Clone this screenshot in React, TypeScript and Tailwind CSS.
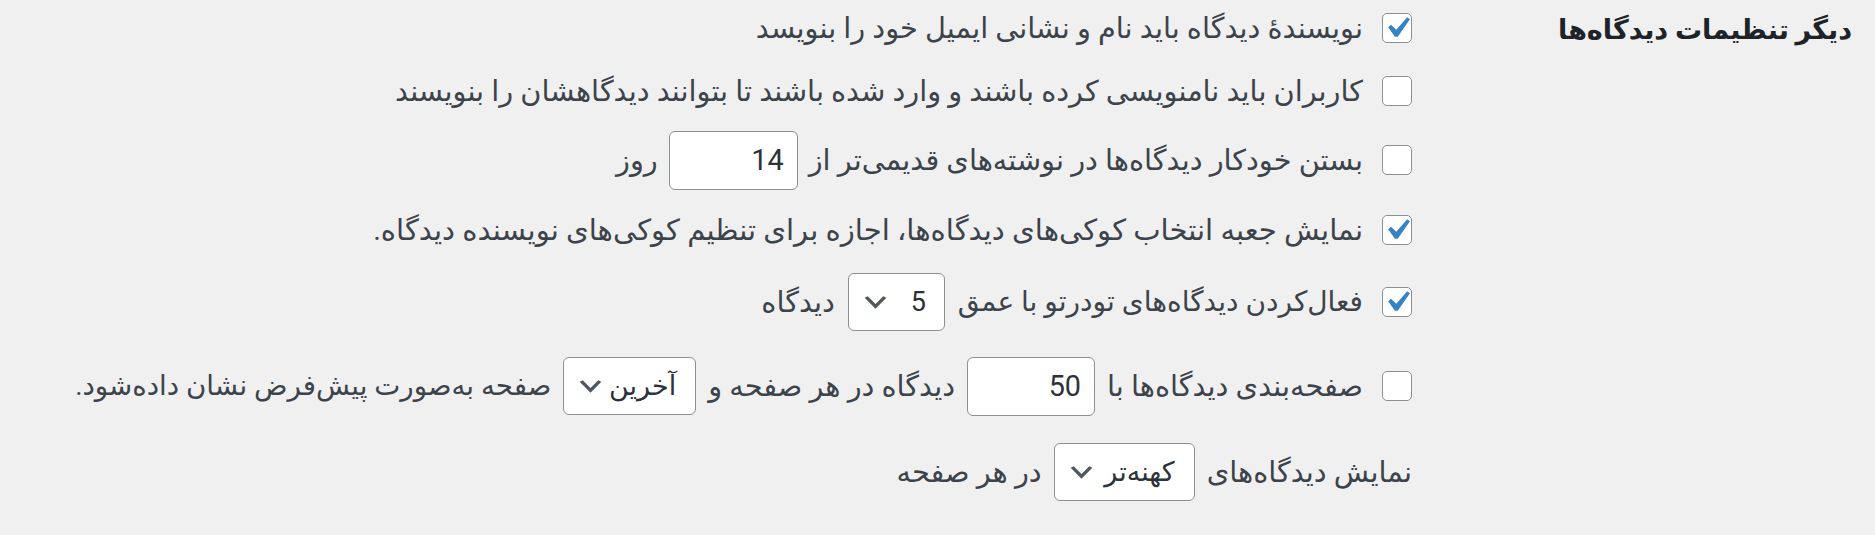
import React from "react";

const FONT = "font-['Roboto','DejaVu_Sans',sans-serif]";

function Check({ checked }: { checked?: boolean }) {
  return (
    <span className="relative flex h-[30px] w-[30px] shrink-0 items-center justify-center rounded-[5px] border border-[#8c8f94] bg-white">
      {checked && (
        <svg viewBox="0 0 20 20" className="absolute h-[42px] w-[42px]" aria-hidden="true">
          <path d="M14.83 4.89l1.34.94-5.81 8.38H9.02L5.78 9.67l1.34-1.25 2.57 2.4z" fill="#3582c4" />
        </svg>
      )}
    </span>
  );
}

function NumInput({ value, w }: { value: string; w: string }) {
  return (
    <input
      readOnly
      value={value}
      className={`${w} h-[59px] shrink-0 rounded-[6px] border border-[#8c8f94] bg-white px-[13px] text-right text-[28.8px] text-[#2c3338] outline-none ${FONT}`}
    />
  );
}

function Select({ value, w, pr }: { value: string; w: string; pr: string }) {
  return (
    <div
      className={`${w} ${pr} flex h-[58px] shrink-0 items-center justify-between overflow-hidden rounded-[6px] border border-[#8c8f94] bg-white pl-[11px] text-[27px] text-[#2c3338]`}
    >
      <span className="whitespace-nowrap leading-none">{value}</span>
      <svg viewBox="0 0 20 20" className="h-[31px] w-[31px] shrink-0" aria-hidden="true">
        <path d="M5 6l5 5 5-5 2 1-7 7-7-7 2-1z" fill="#50575e" />
      </svg>
    </div>
  );
}

function Row({ h, children }: { h: string; children: React.ReactNode }) {
  return <div className={`${h} flex items-center`}>{children}</div>;
}

export default function App() {
  return (
    <div dir="rtl" className={`min-h-[535px] w-full bg-[#f0f0f1] text-[#3c434a] ${FONT}`}>
      <div className="flex pr-[23px]">
        <div className="w-[440px] shrink-0 pt-[11px] text-right text-[27px] font-bold leading-[38px] text-[#1d2327]">
          دیگر تنظیمات دیدگاه‌ها
        </div>
        <div className="flex flex-col text-[28.8px] leading-[36px]">
          <Row h="h-[56px]">
            <label className="flex items-center gap-[19px]">
              <Check checked />
              <span>نویسندهٔ دیدگاه باید نام و نشانی ایمیل خود را بنویسد</span>
            </label>
          </Row>
          <Row h="h-[70px]">
            <label className="flex items-center gap-[19px]">
              <Check />
              <span>کاربران باید نامنویسی کرده باشند و وارد شده باشند تا بتوانند دیدگاهشان را بنویسند</span>
            </label>
          </Row>
          <Row h="h-[68px]">
            <label className="flex items-center gap-[19px]">
              <Check />
              <span className="flex items-center gap-[11px]">
                <span>بستن خودکار دیدگاه‌ها در نوشته‌های قدیمی‌تر از</span>
                <NumInput value="14" w="w-[129px]" />
                <span>روز</span>
              </span>
            </label>
          </Row>
          <Row h="h-[71px]">
            <label className="flex items-center gap-[19px]">
              <Check checked />
              <span className="text-[29.1px]">نمایش جعبه انتخاب کوکی‌های دیدگاه‌ها، اجازه برای تنظیم کوکی‌های نویسنده دیدگاه.</span>
            </label>
          </Row>
          <Row h="h-[74px]">
            <label className="flex items-center gap-[19px]">
              <Check checked />
              <span className="flex items-center gap-[13px]">
                <span className="text-[28px]">فعال‌کردن دیدگاه‌های تودرتو با عمق</span>
                <Select value="5" w="w-[97px]" pr="pr-[18px]" />
                <span>دیدگاه</span>
              </span>
            </label>
          </Row>
          <Row h="h-[94px]">
            <label className="flex items-center gap-[19px]">
              <Check />
              <span className="flex items-center gap-[12px]">
                <span>صفحه‌بندی دیدگاه‌ها با</span>
                <NumInput value="50" w="w-[128px]" />
                <span>دیدگاه در هر صفحه و</span>
                <Select value="آخرین" w="w-[133px]" pr="pr-[19px]" />
                <span className="text-[27.7px]">صفحه به‌صورت پیش‌فرض نشان داده‌شود.</span>
              </span>
            </label>
          </Row>
          <Row h="h-[78px]">
            <span className="flex items-center gap-[12px]">
              <span>نمایش دیدگاه‌های</span>
              <Select value="کهنه‌تر" w="w-[141px]" pr="pr-[19px]" />
              <span>در هر صفحه</span>
            </span>
          </Row>
        </div>
      </div>
    </div>
  );
}
